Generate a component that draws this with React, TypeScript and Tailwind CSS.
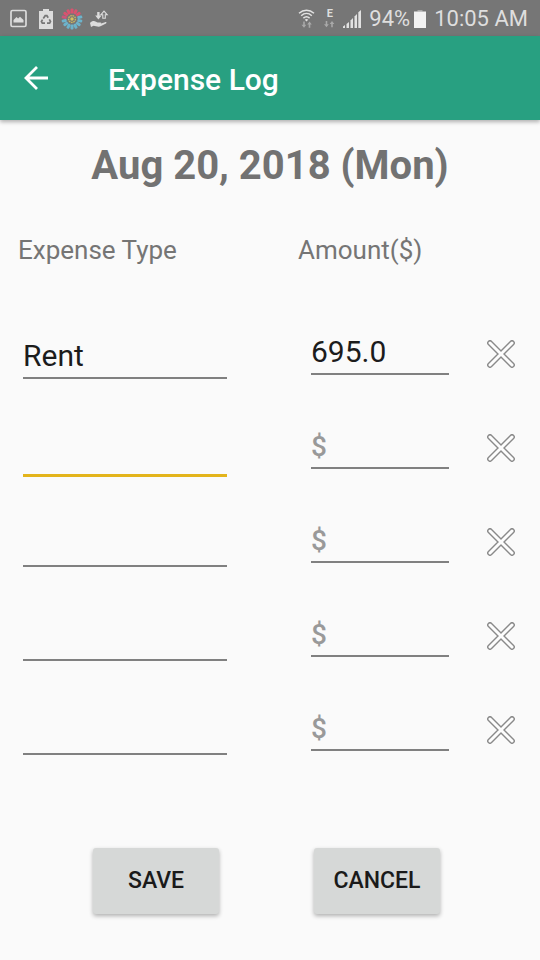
import { useState } from "react";

type Expense = { type: string; amount: string };

const initialExpenses: Expense[] = [
  { type: "Rent", amount: "695.0" },
  { type: "", amount: "" },
  { type: "", amount: "" },
  { type: "", amount: "" },
  { type: "", amount: "" },
];

const sunColors = [
  "#d9536f", "#d9536f", "#d9536f", "#6db3cb", "#6db3cb", "#6db3cb", "#6db3cb",
  "#6db3cb", "#6db3cb", "#6db3cb", "#6db3cb", "#c9577a", "#d9536f", "#d9536f",
];

function PictureIcon() {
  return (
    <svg width="17" height="19" viewBox="0 0 17 19" aria-hidden="true">
      <rect x="1" y="1.5" width="15" height="16" rx="1.5" fill="none" stroke="#dcdcdc" strokeWidth="1.7" />
      <path d="M3.5 13.5V11l3-3 1.6 1.6L10 7.8l3.500 3.200v2.500z" fill="#dcdcdc" />
    </svg>
  );
}

function RecycleBatteryIcon() {
  return (
    <svg width="14" height="20" viewBox="0 0 14 20" aria-hidden="true">
      <path d="M4 0h6v2h4v18H0V2h4z" fill="#dcdcdc" />
      <g fill="none" stroke="#767676" strokeWidth="1.7">
        <path d="M4.300 9.500 6.200 6.700h1.700l1.300 2" />
        <path d="M10.300 10.300 11.500 12.500l-.9 1.700H8" />
        <path d="M6 14.200H3.300l-.9-1.700 1.100-1.900" />
      </g>
    </svg>
  );
}

function SunIcon() {
  return (
    <svg width="22" height="22" viewBox="-11 -11 22 22" aria-hidden="true">
      {sunColors.map((color, i) => (
        <rect
          key={i}
          x="-1.500"
          y="-10.500"
          width="3"
          height="5"
          rx="1"
          fill={color}
          transform={`rotate(${(i * 360) / sunColors.length})`}
        />
      ))}
      <circle r="3.400" fill="none" stroke="#cdb95f" strokeWidth="1.300" strokeDasharray="1.600 0.700" />
      <circle r="1.700" fill="#d8c25c" />
    </svg>
  );
}

function HandIcon() {
  return (
    <svg width="19" height="18" viewBox="0 0 19 18" aria-hidden="true">
      <path d="M7.200 2v3.500H5.200l3.200 4 3.200-4H9.600V2z" fill="#dcdcdc" />
      <path d="M14 1.200 10.900 4.800h1.900v3.400h2.500V4.800h1.900z" fill="none" stroke="#dcdcdc" strokeWidth="1.100" />
      <path d="M0 13c2-2 4-2.500 6-1.200l1.500.8h3c1 0 1 1 0 1.200l4.500-1.600c1.300-.4 2 .5 1 1.300L11 16c-1.500.8-3 .8-5 .2L3.500 15.800 1 17z" fill="#dcdcdc" />
    </svg>
  );
}

function DataArrows() {
  return (
    <g fill="#a9a9a9">
      <path d="M1.700 0h1.600v3.200h1.500L2.500 6.200 0 3.200h1.700z" />
      <path d="M7.200 6.200h1.600V3h1.500L8 0 5.700 3h1.500z" />
    </g>
  );
}

function WifiIcon() {
  return (
    <svg width="17" height="19" viewBox="0 0 17 19" aria-hidden="true">
      <g fill="none" stroke="#e2e2e2" strokeWidth="1.500">
        <path d="M1 4.200C5.500.2 11.500.2 16 4.200" />
        <path d="M3.200 6.700c3.200-2.900 7.400-2.900 10.600 0" />
        <path d="M5.400 9.100c2-1.700 4.200-1.700 6.200 0" />
      </g>
      <path d="M6.800 10.700c1.100-.9 2.300-.9 3.400 0L8.500 12.500z" fill="#e2e2e2" />
      <g transform="translate(3.500 12.500)">
        <DataArrows />
      </g>
    </svg>
  );
}

function EdgeIcon() {
  return (
    <span className="flex w-[11px] flex-col items-center gap-[2px]">
      <span className="text-[11px] leading-[10px] font-bold">E</span>
      <svg width="11" height="7" viewBox="0 0 11 7" aria-hidden="true">
        <DataArrows />
      </svg>
    </span>
  );
}

function SignalIcon() {
  return (
    <svg width="18" height="18" viewBox="0 0 18 18" fill="#e2e2e2" aria-hidden="true">
      <path d="M0 16.500 2 15v3H0z" />
      <path d="M3.500 14 6 12v6H3.500z" />
      <path d="M7.500 10.500 10 8v10H7.500z" />
      <path d="M11.500 6.500 14 4v14h-2.500z" />
      <path d="M15.300 2.300 18 0v18h-2.700z" />
    </svg>
  );
}

function BatteryIcon() {
  return (
    <svg width="12" height="18" viewBox="0 0 12 18" aria-hidden="true">
      <path d="M3.500 0h5v1.500h-5z" fill="#a9a9a9" />
      <path d="M0 1.500h12V18H0z" fill="#f2f2f2" />
    </svg>
  );
}

function BackArrow() {
  return (
    <svg width="24" height="24" viewBox="0 0 24 24" fill="none" stroke="#fff" strokeWidth="2.800" aria-hidden="true">
      <path d="M24 12H2.500M13 1 2 12l11 11" />
    </svg>
  );
}

function CrossIcon() {
  return (
    <svg width="28" height="28" viewBox="0 0 28 28" strokeLinecap="round" aria-hidden="true">
      <path d="M3 3 25 25M25 3 3 25" stroke="#8a8a8a" strokeWidth="5.800" />
      <path d="M3 3 25 25M25 3 3 25" stroke="#fdfdfd" strokeWidth="3" />
    </svg>
  );
}

function StatusBar() {
  return (
    <div className="flex h-9 items-center justify-between bg-[#767676] pt-px pr-3 pl-[10px] text-[22px] text-[#dedede]">
      <div className="flex items-center gap-3">
        <PictureIcon />
        <RecycleBatteryIcon />
        <div className="-ml-1 flex items-center gap-[7px]">
          <SunIcon />
          <HandIcon />
        </div>
      </div>
      <div className="flex items-center">
        <div className="mr-2 flex items-center gap-2">
          <div className="flex items-center gap-[9px]">
            <WifiIcon />
            <EdgeIcon />
          </div>
          <SignalIcon />
        </div>
        <span className="mr-1">94%</span>
        <BatteryIcon />
        <span className="ml-2">10:05 AM</span>
      </div>
    </div>
  );
}

const fieldBase =
  "block w-full min-w-0 rounded-none bg-transparent text-[30px] leading-9 text-[#1c1c1c] outline-none placeholder:text-[28px] placeholder:font-medium placeholder:text-[#999]";
const idleField = "h-[46px] border-b-2 border-[#808080]";
const activeField = "h-[50px] border-b-[3px] border-[#e3b41b]";

const buttonStyle = "h-[66px] w-[126px] rounded-[3px] bg-[#d6d8d7] shadow-[0_2px_4px_rgba(0,0,0,0.3)]";

export default function App() {
  const [expenses, setExpenses] = useState(initialExpenses);
  const [activeRow, setActiveRow] = useState(1);

  const update = (index: number, change: Partial<Expense>) =>
    setExpenses(expenses.map((e, i) => (i === index ? { ...e, ...change } : e)));

  return (
    <div className="min-h-screen bg-[#fafafa] font-[Roboto,sans-serif]">
      <StatusBar />
      <header className="flex h-21 items-center bg-[#28a081] pl-6 shadow-[0_2px_4px_rgba(0,0,0,0.3)]">
        <button type="button" aria-label="Back" className="mr-15">
          <BackArrow />
        </button>
        <h1 className="pt-1 text-[30px] leading-9 font-medium text-white">Expense Log</h1>
      </header>

      <main>
        <h2 className="pt-[22px] text-center text-[40px] leading-12 font-bold text-[#727272]">Aug 20, 2018 (Mon)</h2>

        <form onSubmit={(e) => e.preventDefault()}>
          <div className="mt-[42px] grid grid-cols-[280fr_224fr] px-[18px] text-[26px] leading-9 text-[#757575]">
            <span>Expense Type</span>
            <span>Amount($)</span>
          </div>

          <div className="mt-[39px]">
            {expenses.map((expense, i) => (
              <div key={i} className="grid h-[94px] grid-cols-[288fr_176fr_28fr] pr-[25px] pl-[23px]">
                <div className="pt-[26px] pr-21">
                  <input
                    aria-label={`Expense type ${i + 1}`}
                    value={expense.type}
                    onFocus={() => setActiveRow(i)}
                    onChange={(e) => update(i, { type: e.target.value })}
                    className={`${fieldBase} ${i === activeRow ? activeField : idleField}`}
                  />
                </div>
                <div className="pt-[22px] pr-[38px]">
                  <input
                    aria-label={`Amount ${i + 1}`}
                    inputMode="decimal"
                    placeholder="$"
                    value={expense.amount}
                    onChange={(e) => update(i, { amount: e.target.value })}
                    className={`${fieldBase} ${idleField}`}
                  />
                </div>
                <button
                  type="button"
                  aria-label={`Clear row ${i + 1}`}
                  onClick={() => update(i, { type: "", amount: "" })}
                  className="flex items-center justify-center"
                >
                  <CrossIcon />
                </button>
              </div>
            ))}
          </div>

          <div className="mt-[71px] grid grid-cols-[221fr_226fr] pb-11 pl-[93px] text-[23px] leading-8 font-medium text-[#1a1a1a]">
            <div>
              <button type="submit" className={buttonStyle}>
                SAVE
              </button>
            </div>
            <div>
              <button type="button" className={buttonStyle}>
                CANCEL
              </button>
            </div>
          </div>
        </form>
      </main>
    </div>
  );
}
